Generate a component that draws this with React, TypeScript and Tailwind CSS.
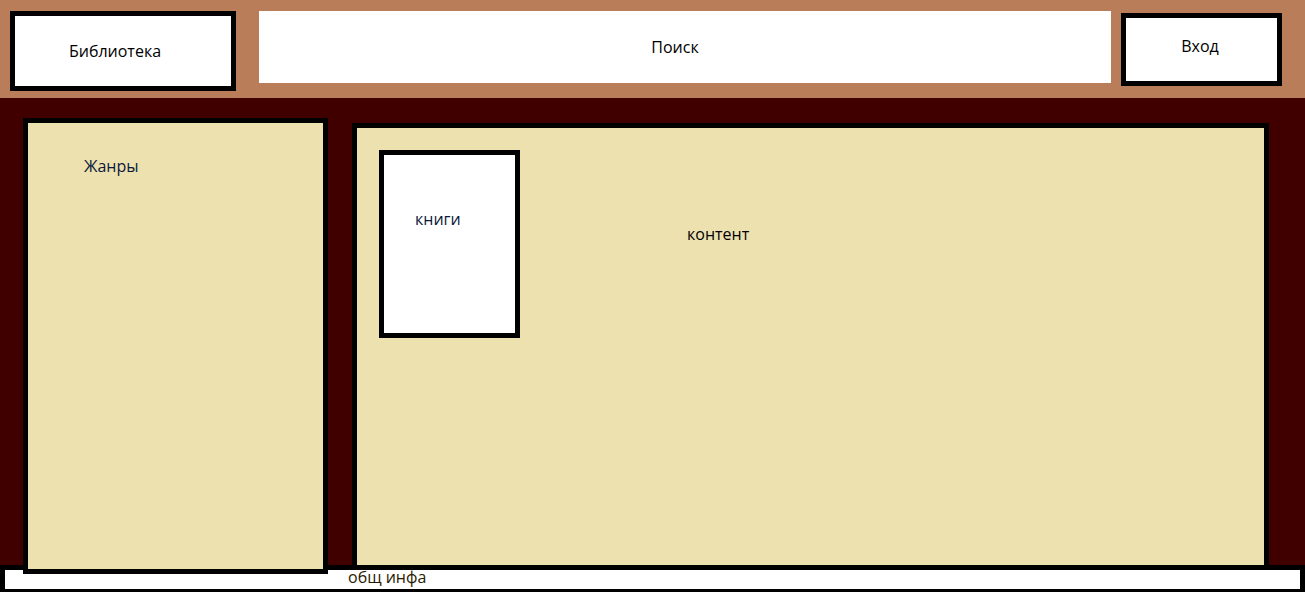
export default function App() {
  const font = { fontFamily: '"Open Sans", "Noto Sans", sans-serif' };
  return (
    <div
      className="w-[1305px] h-[592px] bg-[#400000] flex flex-col overflow-hidden text-[16px] text-black"
      style={font}
    >
      <header className="h-[98px] shrink-0 bg-[#b97d5a] flex items-start pl-[10px] pt-[11px]">
        <div className="w-[226px] h-[80px] border-[5px] border-black bg-white flex items-center justify-center pr-[16px] leading-[24px]">
          Библиотека
        </div>
        <div className="ml-[23px] w-[852px] h-[72px] bg-white flex items-center justify-center pr-[20px] leading-[24px]">
          Поиск
        </div>
        <div className="ml-[10px] mt-[2px] w-[161px] h-[73px] border-[5px] border-black bg-white flex items-center justify-center pb-[8px] pr-[3px] leading-[24px]">
          Вход
        </div>
      </header>

      <main className="h-[467px] shrink-0 flex items-start pl-[23px] pt-[20px]">
        <aside className="relative z-10 w-[305px] h-[456px] shrink-0 border-[5px] border-black bg-[#eee1b0] pl-[56px] pt-[31px] leading-[24px] text-[#0a1a3a]">
          Жанры
        </aside>
        <section className="relative z-10 ml-[24px] mt-[5px] w-[917px] h-[447px] shrink-0 border-[5px] border-black bg-[#eee1b0] flex items-start pl-[22px] pt-[22px]">
          <div className="w-[141px] h-[188px] shrink-0 border-[5px] border-black bg-white pl-[31px] pt-[52px] leading-[24px] text-[#0a1a3a]">
            книги
          </div>
          <div className="ml-[167px] mt-[72px] leading-[24px]">контент</div>
        </section>
      </main>

      <footer className="relative z-0 h-[29px] shrink-0 border-[5px] border-black bg-white pl-[343px] leading-[19px]">
        <span className="relative -top-[2px] text-[#2a1a00]">общ инфа</span>
      </footer>
    </div>
  );
}
